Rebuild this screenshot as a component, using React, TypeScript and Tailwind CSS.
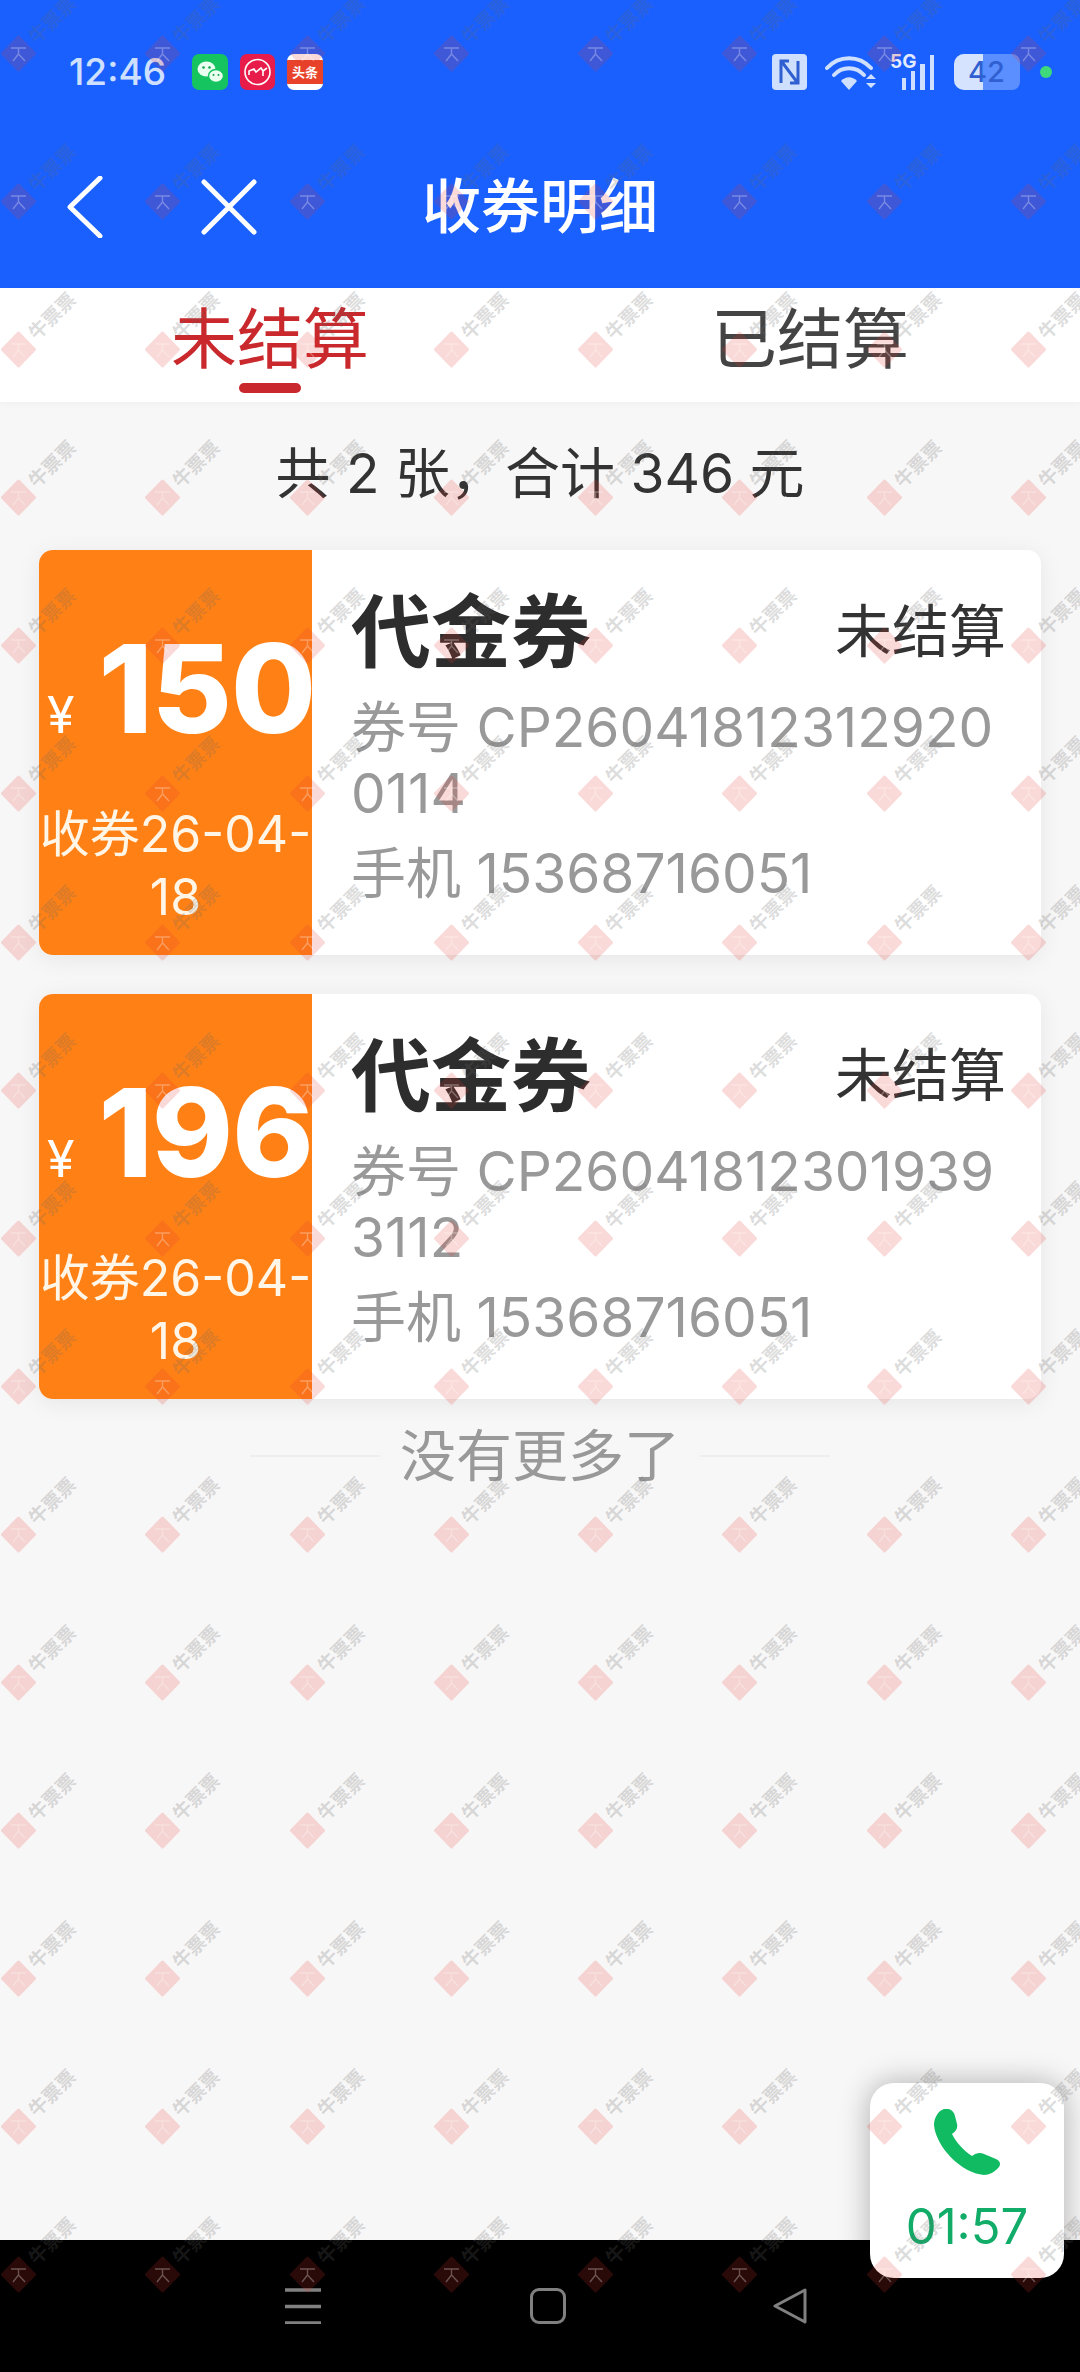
const FONT = "font-['Inter','Noto_Sans_CJK_SC',sans-serif]";

function Watermark() {
  const cells = Array.from({ length: 128 }, (_, i) => i);
  return (
    <div className="absolute inset-0 z-20 overflow-hidden pointer-events-none grid grid-cols-[repeat(8,144.3px)] auto-rows-[148.1px]">
      {cells.map((i) => (
        <svg key={i} width="144" height="148" viewBox="0 0 144 148" className="block overflow-visible">
          <g opacity="0.18">
            <path d="M18.5 37 L34.5 53.5 L18.5 70 L2.5 53.5 Z" fill="#e5382e" stroke="#e5382e" strokeWidth="3" strokeLinejoin="round" />
          </g>
          <path d="M11 48 L26 48 M18.5 48 L18.5 54 L13 61 M18.5 54 L25 61" fill="none" stroke="#ffffff" strokeOpacity="0.3" strokeWidth="1.4" />
          <text x="52" y="27" fontSize="19" fontWeight="700" textAnchor="middle" fill="#666666" fillOpacity="0.24" transform="rotate(-45 52 20)" fontFamily="'Noto Sans CJK SC',sans-serif">牛票票</text>
        </svg>
      ))}
    </div>
  );
}

function StatusBar() {
  return (
    <div className="flex items-center justify-between h-[36px] pl-[69px] pr-[28px]">
      <div className="flex items-center">
        <span className="text-[37px] font-medium leading-[36px] text-[#cfe0ff] w-[123px]">12:46</span>
        <div className="flex items-center gap-[12px]">
          <svg width="36" height="36" viewBox="0 0 36 36">
            <rect width="36" height="36" rx="7" fill="#15c45f" />
            <ellipse cx="14.5" cy="15" rx="9" ry="7.5" fill="#e9fff0" />
            <ellipse cx="24" cy="22" rx="7.5" ry="6.5" fill="#e9fff0" stroke="#15c45f" strokeWidth="1.4" />
            <circle cx="11.5" cy="13.5" r="1.3" fill="#15a04f" />
            <circle cx="17.5" cy="13.5" r="1.3" fill="#15a04f" />
            <circle cx="21.5" cy="21" r="1" fill="#15a04f" />
            <circle cx="26.5" cy="21" r="1" fill="#15a04f" />
          </svg>
          <svg width="35" height="36" viewBox="0 0 35 36">
            <rect width="35" height="36" rx="7" fill="#e81c4b" />
            <circle cx="17.5" cy="18" r="12.5" fill="none" stroke="#ffffff" strokeWidth="1.6" />
            <path d="M9 21 V17 L14 15 L16 18 L21 14 L23 17 L27 14 M23 17 V22" fill="none" stroke="#ffffff" strokeWidth="1.6" />
          </svg>
          <div className="w-[36px] h-[36px] rounded-[7px] bg-white overflow-hidden flex items-center justify-center">
            <div className="w-full h-[24px] bg-[#e8432a] text-white text-[13px] leading-[24px] font-bold text-center whitespace-nowrap">头条</div>
          </div>
        </div>
      </div>
      <div className="flex items-center">
        <svg width="35" height="36" viewBox="0 0 35 36" className="mr-[18px]">
          <rect width="35" height="36" rx="4" fill="#cfe0ff" />
          <path d="M9 29 V7 L17 7 M26 7 V29 L18 29 M10 8 L25 28" fill="none" stroke="#2f5fd0" strokeWidth="3" />
        </svg>
        <svg width="52" height="36" viewBox="0 0 52 36" className="mr-[13px]">
          <path d="M2 14 C14 1 34 1 46 14" fill="none" stroke="#cfe0ff" strokeWidth="4" strokeLinecap="round" />
          <path d="M9 21 C17 12 31 12 39 21" fill="none" stroke="#cfe0ff" strokeWidth="4" strokeLinecap="round" />
          <path d="M16 27 L24 36 L32 27 C27 22 21 22 16 27 Z" fill="#cfe0ff" />
          <path d="M41 25 L46 20 L51 25 Z M41 29 L51 29 L46 34 Z" fill="#cfe0ff" />
        </svg>
        <div className="relative w-[47px] h-[36px] mr-[17px]">
          <span className="absolute left-0 top-[-3px] text-[19px] leading-[22px] font-bold text-[#e3ebff]">5G</span>
          <svg width="47" height="36" viewBox="0 0 47 36" className="block">
            <path d="M12 24 H16 V36 H12 Z M21 17 H25 V36 H21 Z M30 10 H35 V36 H30 Z M40 1 H44 V36 H40 Z" fill="#cfe0ff" />
          </svg>
        </div>
        <div className="relative w-[66px] h-[36px] rounded-l-[10px] rounded-r-[8px] bg-[#5b8fff] overflow-hidden mr-[20px]">
          <div className="w-[29px] h-full bg-[#d5e3ff]" />
          <span className="absolute left-[14px] top-0 text-[29px] leading-[36px] font-medium text-[#2f5fd0]">42</span>
        </div>
        <div className="w-[12px] h-[12px] rounded-full bg-[#3ed97a]" />
      </div>
    </div>
  );
}

function NavBar() {
  return (
    <div className="relative flex items-center justify-center h-[80px] mt-[77px]">
      <div className="absolute left-[67px] top-0 flex items-center h-full gap-[98px]">
        <svg width="36" height="62" viewBox="0 0 36 62">
          <path d="M33 2 L3 31 L33 60" fill="none" stroke="#ffffff" strokeWidth="5" strokeLinecap="round" strokeLinejoin="round" />
        </svg>
        <svg width="56" height="56" viewBox="0 0 56 56">
          <path d="M3 3 L53 53 M53 3 L3 53" fill="none" stroke="#ffffff" strokeWidth="5" strokeLinecap="round" />
        </svg>
      </div>
      <span className="text-[59px] leading-[80px] font-medium text-white">收券明细</span>
    </div>
  );
}

function Ticket({ amount, code }: { amount: string; code: string }) {
  return (
    <div className="flex h-[405px] rounded-[14px] bg-white shadow-[0_4px_24px_rgba(0,0,0,0.07)] overflow-hidden">
      <div className="w-[273px] shrink-0 bg-[#ff8116] text-white flex flex-col pt-[76px]">
        <div className="flex items-baseline pl-[8px] whitespace-nowrap h-[126px]">
          <span className="text-[50px] leading-[126px] mr-[24px]">¥</span>
          <span className="text-[123px] leading-[126px] font-extrabold tracking-[-1px]">{amount}</span>
        </div>
        <div className="mt-[51px] text-[50px] leading-[63px] text-center text-[#fff6e8]">
          收券26-04-<br />18
        </div>
      </div>
      <div className="flex-1 min-w-0 pl-[39px] pr-[35px] pt-[43px]">
        <div className="flex items-center justify-between h-[78px]">
          <span className="text-[80px] leading-[78px] font-bold text-[#2d2d2d]">代金券</span>
          <span className="text-[57px] leading-[78px] text-[#333333]">未结算</span>
        </div>
        <div className="mt-[23px] text-[55px] leading-[66px] text-[#999999] break-all">券号 {code}</div>
        <div className="mt-[14px] text-[55px] leading-[66px] text-[#999999]">手机 15368716051</div>
      </div>
    </div>
  );
}

export default function App() {
  return (
    <div className={`relative w-[1080px] h-[2372px] overflow-hidden flex flex-col bg-[#f8f7f7] ${FONT}`}>
      <header className="h-[288px] bg-[#1a60ff] pt-[54px]">
        <StatusBar />
        <NavBar />
      </header>

      <div className="h-[114px] bg-white grid grid-cols-2 pt-[15px] shadow-[0_2px_6px_rgba(0,0,0,0.03)]">
        <div className="flex flex-col items-center">
          <span className="text-[66px] leading-[72px] text-[#c9282c]">未结算</span>
          <span className="mt-[8px] w-[62px] h-[10px] rounded-full bg-[#c9282c]" />
        </div>
        <div className="flex flex-col items-center">
          <span className="text-[66px] leading-[72px] text-[#444444]">已结算</span>
        </div>
      </div>

      <main className="flex-1 min-h-0">
        <div className="pt-[41px] pb-[47px] text-center text-[55px] leading-[60px] text-[#333333]">共 2 张，合计 346 元</div>
        <div className="flex flex-col gap-[39px] px-[39px]">
          <Ticket amount="150" code="CP260418123129200114" />
          <Ticket amount="196" code="CP260418123019393112" />
        </div>
        <div className="flex items-center justify-center mt-[24px] h-[66px]">
          <span className="w-[130px] h-[2px] bg-[#eeeeee]" />
          <span className="mx-[20px] text-[56px] leading-[66px] text-[#999999]">没有更多了</span>
          <span className="w-[130px] h-[2px] bg-[#eeeeee]" />
        </div>
      </main>

      <nav className="h-[132px] bg-black flex items-start pt-[48px] pl-[285px]">
        <svg width="36" height="36" viewBox="0 0 36 36" className="mr-[209px]">
          <path d="M0 2 H36 M0 18.5 H36 M0 35 H36" stroke="#808080" strokeWidth="3.5" />
        </svg>
        <div className="w-[36px] h-[36px] rounded-[9px] border-[3px] border-[#808080] mr-[206px]" />
        <svg width="36" height="36" viewBox="0 0 36 36">
          <path d="M3 18 L33 2 V34 Z" fill="none" stroke="#808080" strokeWidth="3" strokeLinejoin="round" />
        </svg>
      </nav>

      <div className="absolute z-10 left-[870px] top-[2083px] w-[194px] h-[195px] rounded-[24px] bg-white shadow-[0_0_30px_rgba(0,0,0,0.3)] flex flex-col items-center pt-[26px]">
        <svg width="66" height="66" viewBox="0 0 66 66">
          <path d="M10 0 C16 -1 20 2 21 7 L23 15 C24 19 22 22 18 25 C22 33 29 41 38 47 C42 44 46 43 50 45 L62 50 C66 52 67 55 65 58 C61 63 55 66 50 66 C27 64 2 38 0 16 C0 9 4 2 10 0 Z" fill="#10bb62" />
        </svg>
        <span className="mt-[22px] text-[49px] leading-[60px] text-[#10ac68]">01:57</span>
      </div>

      <Watermark />
    </div>
  );
}
